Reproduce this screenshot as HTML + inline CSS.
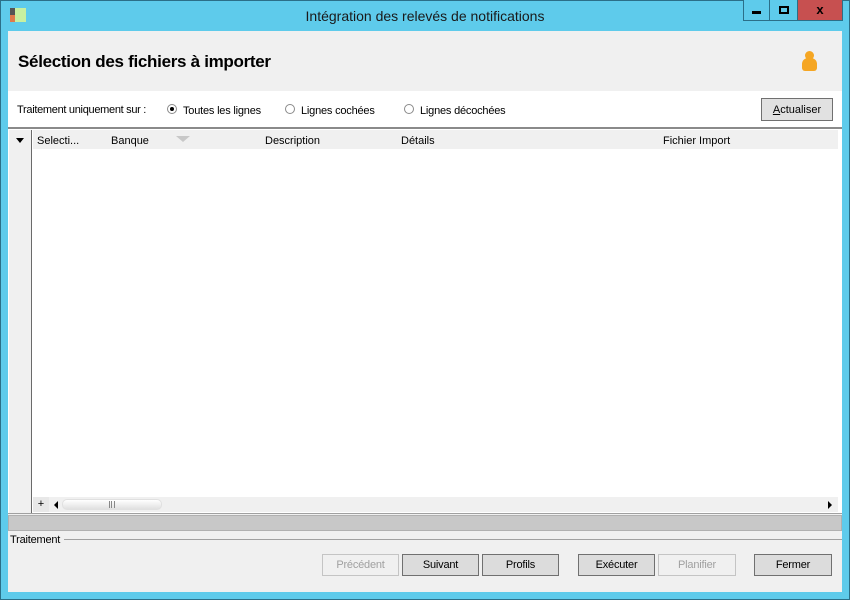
<!DOCTYPE html>
<html><head><meta charset="utf-8"><style>
*{margin:0;padding:0;box-sizing:border-box}
body{width:850px;height:600px;background:#5ecbeb;position:relative;overflow:hidden;font-family:"Liberation Sans",sans-serif;font-size:11px;color:#000}
.a{position:absolute}
.t{white-space:nowrap}
.btn{position:absolute;top:554px;height:22px;border:1px solid #707070;background:#dcdcdc;text-align:center;line-height:21px;font-size:11px;letter-spacing:-0.2px}
.dis{color:#a0a0a0;border-color:#c4c4c4;background:#f0f0f0}
.rad{position:absolute;top:104px;width:10px;height:10px;border:1px solid #8a8a8a;border-radius:50%;background:#fff}
</style></head><body>
<div class="a" style="left:0;top:0;width:850px;height:600px;border:1px solid #2b6f88"></div>
<div class="a" style="left:10px;top:8px;width:5px;height:7px;background:#555"></div>
<div class="a" style="left:10px;top:15px;width:5px;height:7px;background:#e07a4a"></div>
<div class="a" style="left:15px;top:8px;width:11px;height:14px;background:#c8f0a0"></div>
<div class="a t" style="left:0;width:850px;top:8px;text-align:center;font-size:14px;color:#1a1a1a">Intégration des relevés de notifications</div>
<div class="a" style="left:743px;top:0;width:27px;height:21px;border:1px solid #2b6f88;border-top:0;background:#5ecbeb"></div>
<div class="a" style="left:752px;top:11px;width:9px;height:3px;background:#000"></div>
<div class="a" style="left:770px;top:0;width:28px;height:21px;border:1px solid #2b6f88;border-top:0;border-left:0;background:#5ecbeb"></div>
<div class="a" style="left:779px;top:6px;width:10px;height:8px;border:2px solid #000"></div>
<div class="a" style="left:798px;top:0;width:45px;height:21px;background:#c75050;border:1px solid #2b6f88;border-top:0;border-left:0;color:#000;font-weight:bold;font-size:13px;text-align:center;line-height:20px">x</div>
<div class="a" style="left:8px;top:31px;width:834px;height:561px;background:#f0f0f0"></div>
<div class="a t" style="left:18px;top:52px;font-size:17px;font-weight:bold;letter-spacing:-0.3px">Sélection des fichiers à importer</div>
<div class="a" style="left:805px;top:51px;width:9px;height:9px;border-radius:50%;background:#f5a623"></div>
<div class="a" style="left:802px;top:58px;width:15px;height:13px;border-radius:6px 6px 3px 3px;background:#f5a623"></div>
<div class="a" style="left:8px;top:91px;width:834px;height:36px;background:#fff"></div>
<div class="a t" style="left:17px;top:104px;letter-spacing:-0.3px">Traitement uniquement sur :</div>
<div class="rad" style="left:167px"></div><div class="a" style="left:170px;top:107px;width:4px;height:4px;border-radius:50%;background:#000"></div>
<div class="a t" style="left:183px;top:105px;letter-spacing:-0.2px">Toutes les lignes</div>
<div class="rad" style="left:285px"></div>
<div class="a t" style="left:301px;top:105px;letter-spacing:-0.2px">Lignes cochées</div>
<div class="rad" style="left:404px"></div>
<div class="a t" style="left:420px;top:105px;letter-spacing:-0.2px">Lignes décochées</div>
<div class="a" style="left:761px;top:98px;width:72px;height:23px;border:1px solid #707070;background:#e1e1e1;text-align:center;line-height:22px"><u>A</u>ctualiser</div>
<div class="a" style="left:8px;top:127px;width:834px;height:387px;border-top:2px solid #8a8a8a;border-bottom:1px solid #a0a0a0;background:#fff"></div>
<div class="a" style="left:9px;top:130px;width:23px;height:383px;background:#f0f0f0;border-right:1px solid #6a6a6a"></div>
<div class="a" style="left:16px;top:138px;width:0;height:0;border-left:4px solid transparent;border-right:4px solid transparent;border-top:5px solid #000"></div>
<div class="a" style="left:33px;top:130px;width:805px;height:19px;background:#f0f0f0"></div>
<div class="a t" style="left:37px;top:135px">Selecti...</div>
<div class="a t" style="left:111px;top:135px">Banque</div>
<div class="a" style="left:176px;top:136px;width:0;height:0;border-left:7px solid transparent;border-right:7px solid transparent;border-top:6px solid #c8c8c8"></div>
<div class="a t" style="left:265px;top:135px">Description</div>
<div class="a t" style="left:401px;top:135px">Détails</div>
<div class="a t" style="left:663px;top:135px">Fichier Import</div>
<div class="a" style="left:33px;top:497px;width:16px;height:15px;background:#e8e8e8;text-align:center;line-height:15px">+</div>
<div class="a" style="left:49px;top:497px;width:789px;height:15px;background:#f0f0f0"></div>
<div class="a" style="left:54px;top:501px;width:0;height:0;border-top:4px solid transparent;border-bottom:4px solid transparent;border-right:4px solid #000"></div>
<div class="a" style="left:62px;top:499px;width:100px;height:11px;border-radius:5px;background:linear-gradient(#fff,#e0e0e0);border:1px solid #e0e0e0"></div>
<div class="a" style="left:109px;top:501px;width:6px;height:7px;border-left:1px solid #888;border-right:1px solid #888"></div>
<div class="a" style="left:111px;top:501px;width:1px;height:7px;background:#888"></div>
<div class="a" style="left:828px;top:501px;width:0;height:0;border-top:4px solid transparent;border-bottom:4px solid transparent;border-left:4px solid #000"></div>
<div class="a" style="left:8px;top:515px;width:834px;height:16px;background:#c8c8c8;border:1px solid #b0b0b0"></div>
<div class="a t" style="left:10px;top:534px;letter-spacing:-0.2px">Traitement</div>
<div class="a" style="left:64px;top:539px;width:778px;height:1px;background:#a0a0a0"></div>
<div class="btn dis" style="left:322px;width:77px">Précédent</div>
<div class="btn" style="left:402px;width:77px">Suivant</div>
<div class="btn" style="left:482px;width:77px">Profils</div>
<div class="btn" style="left:578px;width:77px">Exécuter</div>
<div class="btn dis" style="left:658px;width:78px">Planifier</div>
<div class="btn" style="left:754px;width:78px">Fermer</div>
</body></html>
